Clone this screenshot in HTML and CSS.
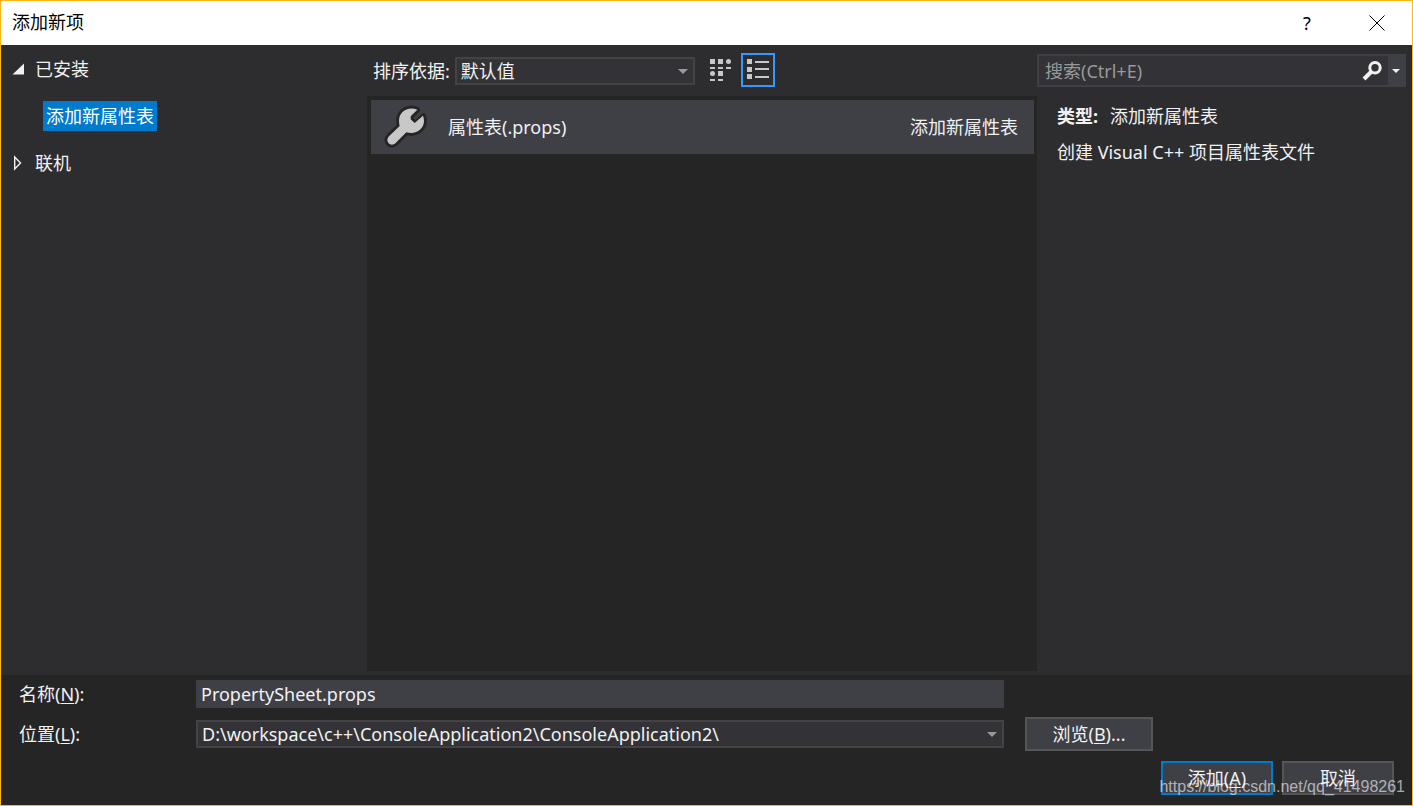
FILE: index.html
```html
<!DOCTYPE html>
<html lang="zh-CN">
<head>
<meta charset="utf-8">
<meta name="viewport" content="width=device-width, initial-scale=1">
<title>添加新项</title>
<link rel="stylesheet" href="styles.css">
</head>
<body>
<div class="dialog">
  <header class="titlebar">
    <h1 class="title">添加新项</h1>
    <button class="title-button" type="button" aria-label="帮助">?</button>
    <button class="title-button" type="button" aria-label="关闭">
      <svg width="16" height="16" viewBox="0 0 16 16" fill="none" stroke="#000"><path d="M.5.5l15 15M15.500.500l-15 15"/></svg>
    </button>
  </header>

  <main class="content">
    <nav class="tree">
      <button class="tree-node" type="button" aria-expanded="true">
        <svg class="tree-arrow" width="12" height="12" viewBox="0 0 12 12"><path d="M12 .500v11H.500z" fill="#f1f1f1"/></svg>
        <span>已安装</span>
      </button>
      <button class="tree-leaf" type="button">添加新属性表</button>
      <button class="tree-node" type="button" aria-expanded="false">
        <svg class="tree-arrow" width="12" height="16" viewBox="0 0 12 16"><path d="M2.700 2v12L8.500 8z" fill="none" stroke="#f1f1f1" stroke-width="1.400"/></svg>
        <span>联机</span>
      </button>
    </nav>

    <section class="templates">
      <div class="toolbar">
        <label for="sort">排序依据:</label>
        <div class="combo sort-combo">
          <select id="sort"><option>默认值</option></select>
          <svg class="combo-arrow" width="10" height="5" viewBox="0 0 10 5"><path d="M0 0h10L5 5z"/></svg>
        </div>
        <div class="views">
          <button class="view-button" type="button" aria-label="小图标">
            <svg width="30" height="30" viewBox="0 0 30 30" fill="#c8c8c8"><path d="M5 4h5v5H5zM13 4h5v5h-5zM5 12h5v2H5zM13 12h5v2h-5zM21 12h5v2h-5zM13 16h5v5h-5zM5 24h5v2H5zM13 24h5v2h-5z"/><circle cx="23.500" cy="6.500" r="2.500"/><circle cx="7.500" cy="18.500" r="2.500"/></svg>
          </button>
          <button class="view-button view-active" type="button" aria-label="列表">
            <svg width="30" height="30" viewBox="0 0 30 30" fill="#c8c8c8"><path d="M4 4h5v5H4zM4 12h5v5H4zM4 19h5v5H4zM12 6h14v2H12zM12 13h14v2H12zM12 21h14v2H12z"/></svg>
          </button>
        </div>
      </div>
      <div class="list">
        <button class="item" type="button">
          <svg width="44" height="44" viewBox="12 15 132 132"><path d="M112 29C84 17 56 36 57 63c0 6 1 11 2 15L27 109c-6 6-7 15-1 21s15 5 21-1l32-32c28 8 53-9 53-34 0-6-1-11-3-16l-25 22-12-11V49z" fill="#c8c8c8" stroke="#252526" stroke-width="17" stroke-linejoin="round" paint-order="stroke"/><path d="M104 58L133 31" stroke="#3f3f46" stroke-width="6"/></svg>
          <span class="item-name">属性表(.props)</span>
          <span>添加新属性表</span>
        </button>
      </div>
    </section>

    <aside class="details">
      <div class="search">
        <input class="search-input" type="text" aria-label="搜索" placeholder="搜索(Ctrl+E)">
        <button class="search-button" type="button" aria-label="搜索">
          <svg width="20" height="20" viewBox="0 0 20 20" fill="none" stroke="#f1f1f1"><circle cx="13" cy="6.800" r="5.200" stroke-width="3"/><path d="M9 11l-7 7" stroke-width="4"/></svg>
        </button>
        <button class="search-options" type="button" aria-label="搜索选项">
          <svg width="8" height="4" viewBox="0 0 8 4"><path d="M0 0h8L4 4z" fill="#f1f1f1"/></svg>
        </button>
      </div>
      <div class="info">
        <p><strong class="info-label">类型:</strong>添加新属性表</p>
        <p>创建 Visual C++ 项目属性表文件</p>
      </div>
    </aside>
  </main>

  <footer class="footer">
    <div class="fields">
      <label for="name">名称(<u>N</u>):</label>
      <input class="name-input" id="name" type="text" value="PropertySheet.props">
      <label class="location-label" for="location">位置(<u>L</u>):</label>
      <div class="combo location-combo">
        <select id="location"><option>D:\workspace\c++\ConsoleApplication2\ConsoleApplication2\</option></select>
        <svg class="combo-arrow" width="10" height="5" viewBox="0 0 10 5"><path d="M0 0h10L5 5z"/></svg>
      </div>
      <button class="button browse" type="button">浏览(<u>B</u>)...</button>
    </div>
    <div class="actions">
      <button class="button primary" type="button">添加(<u>A</u>)</button>
      <button class="button" type="button">取消</button>
    </div>
  </footer>
  <span class="watermark">https://blog.csdn.net/qq_41498261</span>
</div>
</body>
</html>
```
FILE: styles.css
```css
* { box-sizing: border-box; }

body {
  margin: 0;
  background: #252526;
  color: #f1f1f1;
  font: 18px/24px "Noto Sans", "Noto Sans CJK SC", sans-serif;
}

button, input, select {
  margin: 0;
  padding: 0;
  border: 0;
  border-radius: 0;
  background: none;
  color: inherit;
  font: inherit;
}

svg { display: block; flex: none; }

u { text-underline-offset: 2px; text-decoration-thickness: 1px; }

.dialog {
  position: relative;
  display: flex;
  flex-direction: column;
  min-height: 100vh;
  border: 1px solid #fdb913;
}

.titlebar {
  display: flex;
  height: 44px;
  padding-left: 11px;
  background: #fff;
  color: #000;
}

.title { flex: 1; margin: 0; font-size: 18px; font-weight: 400; line-height: 42px; }

.title-button { display: grid; place-items: center; width: 70px; }

.content {
  flex: 1;
  display: grid;
  grid-template-columns: 366px minmax(0, 1fr) 375px;
  background: #2d2d30;
}

.tree {
  display: flex;
  flex-direction: column;
  align-items: flex-start;
  gap: 19px;
  padding: 11px;
}

.tree-node { display: flex; align-items: center; gap: 11px; height: 26px; }

.tree-leaf { height: 30px; margin-left: 31px; padding: 0 3px; background: #007acc; color: #fff; }

.templates { display: flex; flex-direction: column; padding-bottom: 4px; }

.toolbar { display: flex; align-items: center; gap: 5px; height: 51px; padding-left: 6px; }

.combo { position: relative; border: 2px solid #434346; background: #333337; }

.combo select { display: block; width: 100%; height: 24px; padding: 0 24px 0 4px; appearance: none; line-height: 24px; }

.combo-arrow { position: absolute; top: 10px; right: 5px; fill: #999; pointer-events: none; }

.sort-combo { width: 240px; }

.views { display: flex; gap: 4px; margin-left: 3px; padding-bottom: 1px; }

.view-button { display: grid; place-items: center; width: 34px; height: 34px; }

.view-active { border: 2px solid #3399ff; }

.list { flex: 1; padding: 4px 3px 4px 4px; background: #252526; }

.item {
  display: flex;
  align-items: center;
  width: 100%;
  height: 54px;
  padding: 0 16px 0 13px;
  background: #3f3f46;
  text-align: left;
}

.item-name { flex: 1; margin-left: 20px; }

.details { padding: 9px 6px 0 0; }

.search { display: flex; align-items: center; height: 33px; border: 2px solid #3f3f46; background: #333337; }

.search-input { flex: 1; min-width: 0; padding-left: 6px; }

.search-input::placeholder { color: #999; opacity: 1; }

.search-button { width: 26px; }

.search-options { display: grid; place-items: center; align-self: stretch; width: 16px; background: #3f3f46; }

.info { display: grid; gap: 12px; padding: 17px 20px; }

.info p { margin: 0; }

.info-label { margin-right: 12px; }

.footer { padding: 5px 18px 10px; }

.fields {
  display: grid;
  grid-template-columns: 177px minmax(0, 808px) 149px;
  align-items: center;
  row-gap: 9px;
}

.name-input { width: 100%; height: 28px; padding: 0 5px; background: #3f3f46; }

.location-label { grid-column: 1; }

.browse { margin-left: 21px; }

.button { width: 128px; height: 34px; border: 2px solid #555; background: #3f3f46; text-align: center; }

.actions { display: flex; justify-content: flex-end; gap: 9px; padding-top: 10px; }

.actions .button { width: 112px; }

.actions .primary { border-color: #007acc; }

.watermark {
  position: absolute;
  right: 7px;
  bottom: 8px;
  color: rgba(255, 255, 255, .6);
  font: 16px/20px "Liberation Sans", Arial, sans-serif;
  pointer-events: none;
}
```
